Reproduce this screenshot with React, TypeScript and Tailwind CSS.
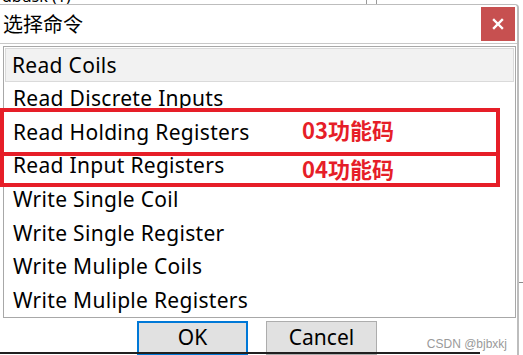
import React from "react";

const items = [
  "Read Coils",
  "Read Discrete Inputs",
  "Read Holding Registers",
  "Read Input Registers",
  "Write Single Coil",
  "Write Single Register",
  "Write Muliple Coils",
  "Write Muliple Registers",
];

export default function App() {
  return (
    <div
      className="relative w-[523px] h-[355px] overflow-hidden bg-white text-black"
      style={{ fontFamily: '"Noto Sans", "Noto Sans CJK SC", sans-serif' }}
    >
      {/* background window strip */}
      <div className="h-[4px] overflow-hidden flex">
        <div className="mt-[-13px] pl-[2px] text-[16px] leading-[18px] w-[366px]">dbusk (1)</div>
        <div className="w-px h-full bg-[#9a9a9a]" />
        <div className="w-[9px]" />
        <div className="w-px h-full bg-[#9a9a9a]" />
      </div>

      {/* dialog */}
      <div className="w-[519px] h-[351px] flex flex-col border-t border-r-[2px] border-[#bdbdbd] rounded-tr-[4px] bg-white">
        {/* title bar */}
        <div className="h-[40px] flex items-center justify-between pl-[3px] pr-[2px]">
          <span
            className="text-[20px] leading-none"
            style={{ fontFamily: '"Noto Sans CJK SC", sans-serif' }}
          >
            选择命令
          </span>
          <div className="w-[34px] h-[34px] bg-[#c75050] flex items-center justify-center mt-[-1px]">
            <svg width="12" height="12" viewBox="0 0 12 12">
              <path d="M2 2 L10 10 M10 2 L2 10" stroke="white" strokeWidth="2.4" strokeLinecap="square" />
            </svg>
          </div>
        </div>
        <div className="h-px bg-[#c8c8c8]" />

        {/* list box */}
        <div className="ml-[3px] mr-[1px] mt-[2px] h-[272px] border border-[#a8a8a8] flex flex-col pt-[1px]">
          {items.map((t, i) => (
            <div
              key={t}
              className={
                "h-[33.6px] flex items-center pl-[6px] text-[21px] tracking-[0.3px] leading-none " +
                (i === 0 ? "mx-[1px] bg-[#f2f2f2] border border-[#dadada]" : "ml-[2px] border border-transparent")
              }
            >
              {t}
            </div>
          ))}
        </div>

        {/* buttons */}
        <div className="flex-1 flex items-start pt-[3px] relative">
          <div className="ml-[137px] w-[111px] h-[34px] bg-[#e1e1e1] border-[2px] border-[#0078d7] flex items-center justify-center text-[21px]">
            OK
          </div>
          <div className="ml-[18px] w-[111px] h-[34px] bg-[#e1e1e1] border border-[#adadad] flex items-center justify-center text-[21px]">
            Cancel
          </div>
          <div
            className="ml-auto mr-[10px] mt-[14px] text-[12px] text-[#9a9a9a]"
            style={{ fontFamily: '"Liberation Sans", sans-serif' }}
          >
            CSDN @bjbxkj
          </div>
        </div>
      </div>
      <div className="absolute left-0 bottom-[1px] w-[480px] h-[2px] bg-[#202020]" />
      <div className="absolute right-0 top-[282px] w-[4px] h-px bg-[#8a8a8a]" />

      {/* red annotation boxes */}
      <div className="absolute left-[0px] top-[108px] w-[500px] h-[48px] border-[4px] border-[#e61e28]" />
      <div className="absolute left-[0px] top-[152px] w-[500px] h-[35px] border-[4px] border-[#e61e28]" />
      <div
        className="absolute left-[302px] top-[116px] text-[22px] font-bold text-[#e61e28] leading-[26px]"
        style={{ fontFamily: '"Noto Sans CJK SC", sans-serif' }}
      >
        03功能码
      </div>
      <div
        className="absolute left-[302px] top-[155px] text-[22px] font-bold text-[#e61e28] leading-[26px]"
        style={{ fontFamily: '"Noto Sans CJK SC", sans-serif' }}
      >
        04功能码
      </div>
    </div>
  );
}
